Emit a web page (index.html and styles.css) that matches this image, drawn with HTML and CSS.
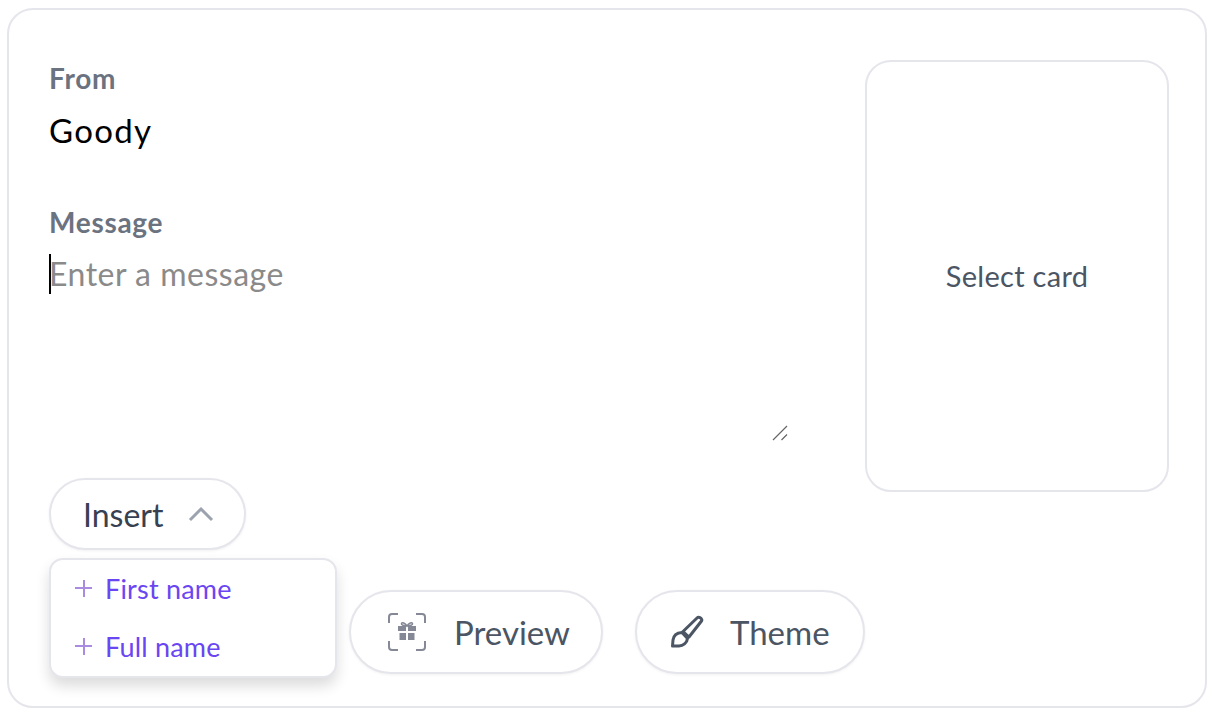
FILE: index.html
```html
<!DOCTYPE html>
<html lang="en">
<head>
    <meta charset="UTF-8">
    <title>Card message</title>
    <link rel="stylesheet" href="styles.css">
</head>
<body>

<div class="panel">
    <div class="top">
        <div class="fields">
            <div class="label">From</div>
            <div class="from-name">Goody</div>
            <div class="label message-label">Message</div>
            <div class="message-box">
                <span class="caret"></span>
                <span class="placeholder">Enter a message</span>
                <svg class="resize-grip" width="16" height="16" viewBox="0 0 16 16">
                    <path d="M1 15L15 1M9.5 15L15 9.5" stroke="#666" stroke-width="1.2" fill="none"/>
                </svg>
            </div>
        </div>
        <div class="card-select">Select card</div>
    </div>

    <div class="insert">
        <button class="pill insert-btn">
            Insert
            <svg width="26" height="16" viewBox="0 0 26 16">
                <path d="M2 14L13 3L24 14" stroke="#9ca3af" stroke-width="3" fill="none"/>
            </svg>
        </button>
        <div class="insert-menu">
            <div class="menu-item"><span class="plus"></span>First name</div>
            <div class="menu-item"><span class="plus"></span>Full name</div>
        </div>
    </div>

    <div class="actions">
        <button class="pill action-btn preview-btn">
            <svg width="38" height="38" viewBox="0 0 38 38">
                <path d="M1 10V4Q1 1 4 1H10M28 1H34Q37 1 37 4V10M37 28V34Q37 37 34 37H28M10 37H4Q1 37 1 34V28" stroke="#858995" stroke-width="2" fill="none"/>
                <path d="M10 13H18V18H10ZM20 13H28V18H20ZM11.5 20H18V27H11.5ZM20 20H26.5V27H20Z" fill="#858995"/>
                <path d="M19 13C17 10 14 9 13.5 10.5C13 12 16 13 19 13C22 13 25 12 24.5 10.5C24 9 21 10 19 13Z" stroke="#858995" stroke-width="1.6" fill="none"/>
            </svg>
            Preview
        </button>
        <button class="pill action-btn theme-btn">
            <svg width="34" height="34" viewBox="0 0 34 34">
                <path d="M27 3C29 1 33 4 31.5 6L19 22L13 16.5Z" stroke="#4b5563" stroke-width="3" stroke-linejoin="round" fill="none"/>
                <path d="M12 17.5C6 18 3.5 21 3 25L2.5 31H9C13 31 17 28 17.5 23.5Z" stroke="#4b5563" stroke-width="3" stroke-linejoin="round" fill="none"/>
            </svg>
            Theme
        </button>
    </div>
</div>

</body>
</html>
```

FILE: styles.css
```css
html, body { margin: 0; padding: 0; background: #fff; }
body { font-family: Lato, "Noto Sans", sans-serif; }

.panel {
  box-sizing: border-box;
  width: 1200px;
  height: 700px;
  margin: 8px 0 0 7px;
  padding: 50px 36px 0 40px;
  background: #fff;
  border: 2px solid #e5e5ec;
  border-radius: 26px;
}

.top {
  display: flex;
  justify-content: space-between;
}

.fields { width: 740px; }

.label {
  font-size: 28px;
  line-height: 36px;
  font-weight: 700;
  letter-spacing: 0.7px;
  color: #6b7280;
}

.from-name {
  margin-top: 14px;
  font-size: 33px;
  line-height: 40px;
  letter-spacing: 1.3px;
  color: #000;
}

.message-label { margin-top: 54px; }

.message-box {
  position: relative;
  height: 200px;
  margin-top: 14px;
  font-size: 32px;
  line-height: 40px;
  letter-spacing: 0.5px;
}

.placeholder { color: #8a8a8a; }

.caret {
  position: absolute;
  left: 0;
  top: 0;
  width: 2px;
  height: 40px;
  background: #000;
}

.resize-grip {
  position: absolute;
  right: 1px;
  top: 171px;
}

.card-select {
  box-sizing: border-box;
  display: flex;
  align-items: center;
  justify-content: center;
  width: 304px;
  height: 432px;
  padding-bottom: 2px;
  border: 2px solid #e5e5ec;
  border-radius: 26px;
  font-size: 29px;
  letter-spacing: 0.3px;
  color: #4b5563;
}

.pill {
  display: flex;
  align-items: center;
  box-sizing: border-box;
  background: #fff;
  border: 2px solid #e5e5ec;
  border-radius: 36px;
  font-family: inherit;
  box-shadow: 0 1px 3px rgba(0,0,0,0.06);
}

.insert {
  position: relative;
  margin-top: -14px;
  width: 197px;
}

.insert-btn {
  justify-content: space-between;
  width: 197px;
  height: 72px;
  padding: 0 30px 0 32px;
  font-size: 32px;
  color: #374151;
}

.insert-menu {
  position: absolute;
  left: 0;
  top: 80px;
  box-sizing: border-box;
  width: 288px;
  height: 120px;
  background: #fff;
  border: 2px solid #e5e5ec;
  border-radius: 14px;
  box-shadow: 0 8px 14px rgba(0,0,0,0.14);
}

.menu-item {
  display: flex;
  align-items: center;
  gap: 13px;
  height: 56px;
  margin-bottom: 2px;
  padding-left: 24px;
  font-size: 27px;
  letter-spacing: 0.2px;
  color: #6a46f2;
}

.plus {
  width: 17px;
  height: 17px;
  background:
    linear-gradient(#a98be0, #a98be0) center / 100% 2px no-repeat,
    linear-gradient(#a98be0, #a98be0) center / 2px 100% no-repeat;
}

.actions {
  display: flex;
  gap: 32px;
  margin: 40px 0 0 300px;
}

.action-btn {
  height: 84px;
  border-radius: 42px;
  font-size: 33px;
  color: #4b5563;
}

.preview-btn { width: 254px; padding-left: 37px; gap: 28px; }
.theme-btn { width: 230px; padding-left: 33px; gap: 26px; }
```
